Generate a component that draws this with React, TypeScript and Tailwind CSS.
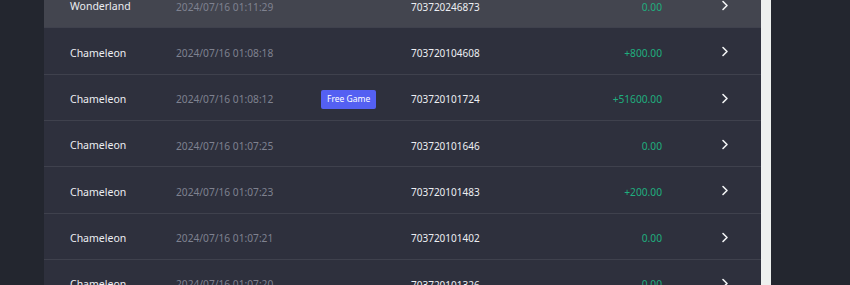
import React from "react";

const rows = [
  { name: "Wonderland", date: "2024/07/16 01:11:29", id: "703720246873", amt: "0.00", free: false, hover: true },
  { name: "Chameleon", date: "2024/07/16 01:08:18", id: "703720104608", amt: "+800.00", free: false },
  { name: "Chameleon", date: "2024/07/16 01:08:12", id: "703720101724", amt: "+51600.00", free: true },
  { name: "Chameleon", date: "2024/07/16 01:07:25", id: "703720101646", amt: "0.00", free: false },
  { name: "Chameleon", date: "2024/07/16 01:07:23", id: "703720101483", amt: "+200.00", free: false },
  { name: "Chameleon", date: "2024/07/16 01:07:21", id: "703720101402", amt: "0.00", free: false },
  { name: "Chameleon", date: "2024/07/16 01:07:20", id: "703720101326", amt: "0.00", free: false },
];

function Chevron() {
  return (
    <svg width="8" height="11" viewBox="0 0 8 11" fill="none">
      <path d="M2 1.5 L6 5.5 L2 9.5" stroke="#f3f4f6" strokeWidth="1.6" strokeLinecap="round" strokeLinejoin="round" />
    </svg>
  );
}

export default function App() {
  return (
    <div className="w-[850px] h-[285px] overflow-hidden bg-[#23262f] flex" style={{ fontFamily: '"Noto Sans", "Open Sans", sans-serif' }}>
      <div className="w-[44px] shrink-0" />
      <div className="w-[717px] shrink-0 bg-[#2e303d] flex flex-col -mt-[18px]">
        {rows.map((r, i) => (
          <div
            key={i}
            className={`h-[46.33px] shrink-0 flex items-center pt-[5px] border-b border-[#3f414d] text-[10px] ${r.hover ? "bg-[#43454f]" : ""}`}
          >
            <div className="w-[132px] pl-[26px] shrink-0 text-[#eceef2] text-[10.5px]">{r.name}</div>
            <div className="w-[145px] shrink-0 text-[#7f8290] text-[10.2px]">{r.date}</div>
            <div className="w-[90px] shrink-0">
              {r.free && (
                <span className="inline-flex items-center h-[19px] px-[6px] rounded-[2px] bg-[#5460f2] text-white text-[8.5px]">Free Game</span>
              )}
            </div>
            <div className="w-[120px] shrink-0 text-[#eceef2]">{r.id}</div>
            <div className="w-[131px] shrink-0 text-right text-[#1fae7e] text-[10.2px]">{r.amt}</div>
            <div className="ml-[59px] shrink-0 flex items-center -mt-[3px]">
              <Chevron />
            </div>
          </div>
        ))}
      </div>
      <div className="w-[10px] shrink-0 bg-[#eef0ef]" />
      <div className="flex-1 bg-[#23262f]" />
    </div>
  );
}
